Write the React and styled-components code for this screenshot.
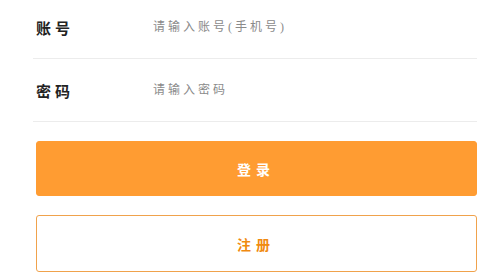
import React, { useState } from "react";
import styled, { createGlobalStyle } from "styled-components";

const GlobalStyle = createGlobalStyle`
  html, body {
    margin: 0;
    padding: 0;
    background: #fff;
  }
  * {
    box-sizing: border-box;
  }
`;

const App = () => {
  const [account, setAccount] = useState("");
  const [password, setPassword] = useState("");

  return (
    <>
      <GlobalStyle />
      <Container>
        <Field>
          <Label>账号</Label>
          <Input
            value={account}
            onChange={(e) => setAccount(e.target.value)}
            placeholder="请输入账号(手机号)"
          />
        </Field>
        <Field>
          <Label>密码</Label>
          <Input
            type="password"
            value={password}
            onChange={(e) => setPassword(e.target.value)}
            placeholder="请输入密码"
          />
        </Field>
        <Actions>
          <Button primary>登录</Button>
          <Button>注册</Button>
        </Actions>
      </Container>
    </>
  );
};

const Container = styled.div`
  width: 441px;
  margin: -4px 0 0 36px;
  font-family: "Liberation Serif", "Noto Sans CJK SC", serif;
`;

const Field = styled.div`
  height: 63px;
  display: flex;
  align-items: center;
  border-bottom: 1px solid #ececec;
  margin-left: -3px;
  padding-left: 3px;
`;

const Label = styled.span`
  width: 117px;
  font-size: 15px;
  font-weight: 700;
  color: #222;
  letter-spacing: 4px;
`;

const Input = styled.input`
  flex: 1;
  border: none;
  outline: none;
  padding: 0;
  margin: 0;
  font-family: inherit;
  font-size: 12px;
  letter-spacing: 3px;
  color: #333;
  background: transparent;

  &::placeholder {
    color: #8a8a8a;
  }
`;

const Actions = styled.div`
  display: flex;
  flex-direction: column;
  gap: 19px;
  padding-top: 19px;
`;

const Button = styled.button`
  height: ${(p) => (p.primary ? "55px" : "57px")};
  width: 100%;
  border-radius: 3px;
  border: 1px solid ${(p) => (p.primary ? "#ff9c32" : "#f0a24c")};
  background: ${(p) => (p.primary ? "#ff9c32" : "#fff")};
  color: ${(p) => (p.primary ? "#fff" : "#f08a10")};
  font-family: inherit;
  font-size: 14px;
  font-weight: 700;
  letter-spacing: 5px;
  padding-left: 5px;
  cursor: pointer;
`;

export default App;
